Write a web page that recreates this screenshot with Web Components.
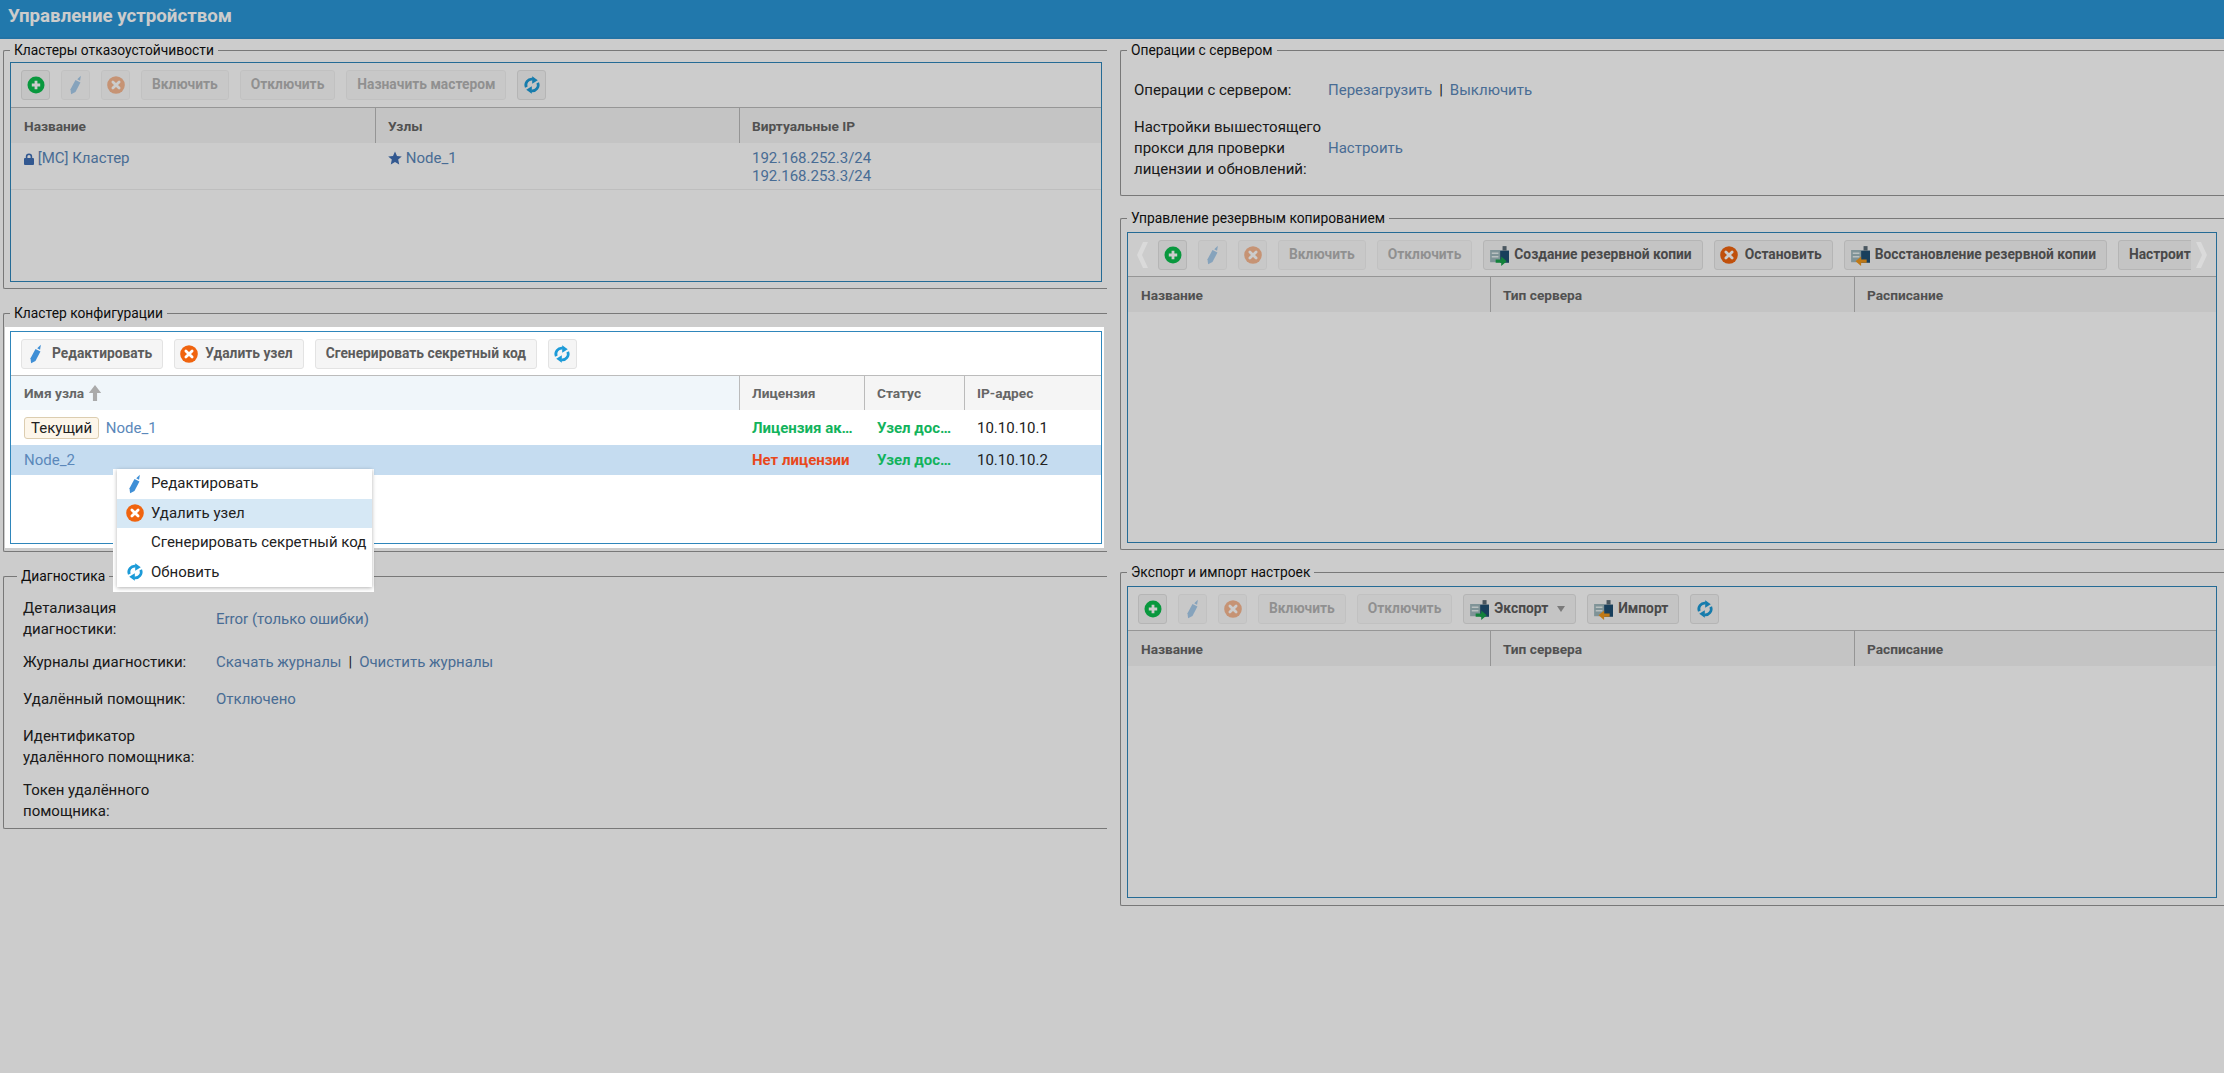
<!DOCTYPE html>
<html lang="ru">
<head>
<meta charset="utf-8">
<title>Управление устройством</title>
<style>
  html, body { margin: 0; background: #fff; }
  body { font: 15px/21px Roboto, "Liberation Sans", sans-serif; color: #222; height: 1073px; overflow: hidden; }
  a { color: #5b88ba; text-decoration: none; }
  .sep { margin: 0 7px; }
  .ok { color: #12b35c; font-weight: 700; }
  .bad { color: #e8481c; font-weight: 700; }
</style>
</head>
<body>
<x-titlebar>Управление устройством</x-titlebar>
<x-columns>
  <x-col style="--gap:16px">
    <x-group legend="Кластеры отказоустойчивости">
      <x-grid style="--cols:364px 364px 1fr;--tb:45px;height:220px">
        <x-btn slot="toolbar" icon="plus"></x-btn>
        <x-btn slot="toolbar" icon="pencil" disabled></x-btn>
        <x-btn slot="toolbar" icon="cross" disabled></x-btn>
        <x-btn slot="toolbar" disabled>Включить</x-btn>
        <x-btn slot="toolbar" disabled>Отключить</x-btn>
        <x-btn slot="toolbar" disabled>Назначить мастером</x-btn>
        <x-btn slot="toolbar" icon="refresh"></x-btn>
        <x-row head><x-cell head>Название</x-cell><x-cell head>Узлы</x-cell><x-cell head>Виртуальные IP</x-cell></x-row>
        <x-row style="border-bottom:1px solid #eee;align-items:start;padding-top:6px;box-sizing:content-box;height:40px">
          <x-cell><x-icon name="lock"></x-icon> <a>[МС] Кластер</a></x-cell>
          <x-cell><x-icon name="star" size="14"></x-icon> <a>Node_1</a></x-cell>
          <x-cell><a>192.168.252.3/24<br>192.168.253.3/24</a></x-cell>
        </x-row>
      </x-grid>
    </x-group>

    <x-group legend="Кластер конфигурации" active style="--pad-top:6px;--pad-bottom:3px">
      <x-grid style="--cols:728px 125px 100px 1fr;height:213px">
        <x-btn slot="toolbar" icon="pencil">Редактировать</x-btn>
        <x-btn slot="toolbar" icon="cross">Удалить узел</x-btn>
        <x-btn slot="toolbar">Сгенерировать секретный код</x-btn>
        <x-btn slot="toolbar" icon="refresh"></x-btn>
        <x-row head style="height:34px">
          <x-cell head sorted>Имя узла <x-icon name="up" size="16"></x-icon></x-cell>
          <x-cell head>Лицензия</x-cell><x-cell head>Статус</x-cell><x-cell head>IP-адрес</x-cell>
        </x-row>
        <x-row style="height:35px">
          <x-cell><x-badge>Текущий</x-badge> <a>Node_1</a></x-cell>
          <x-cell><span class="ok">Лицензия ак…</span></x-cell>
          <x-cell><span class="ok">Узел дос…</span></x-cell>
          <x-cell>10.10.10.1</x-cell>
        </x-row>
        <x-row style="height:30px;background:#c5dcf0">
          <x-cell><a>Node_2</a></x-cell>
          <x-cell><span class="bad">Нет лицензии</span></x-cell>
          <x-cell><span class="ok">Узел дос…</span></x-cell>
          <x-cell>10.10.10.2</x-cell>
        </x-row>
      </x-grid>
    </x-group>

    <x-group legend="Диагностика" style="--lg:12px;--field-x:18px;--label-w:175px;--label-col:193px;--pad-top:14px;--pad-bottom:6px">
      <x-field>
        <span slot="label">Детализация диагностики:</span><a>Error (только ошибки)</a>
      </x-field>
      <x-field style="margin-top:12px">
        <span slot="label">Журналы диагностики:</span><a>Скачать журналы</a><span class="sep">|</span><a>Очистить журналы</a>
      </x-field>
      <x-field style="margin-top:16px">
        <span slot="label">Удалённый помощник:</span><a>Отключено</a>
      </x-field>
      <x-field style="margin-top:16px"><span slot="label">Идентификатор удалённого помощника:</span></x-field>
      <x-field style="margin-top:12px"><span slot="label">Токен удалённого помощника:</span></x-field>
    </x-group>
  </x-col>

  <x-col style="--gap:14px;--pad-right:4px">
    <x-group legend="Операции с сервером" style="--field-x:12px;--label-w:190px;--pad-top:22px;--pad-bottom:15px">
      <x-field><span slot="label">Операции с сервером:</span><a>Перезагрузить</a><span class="sep">|</span><a>Выключить</a></x-field>
      <x-field style="margin-top:16px"><span slot="label">Настройки вышестоящего прокси для проверки лицензии и обновлений:</span><a>Настроить</a></x-field>
    </x-group>

    <x-group legend="Управление резервным копированием" style="--pad-top:2px">
      <x-grid scroll style="--cols:362px 364px 1fr;height:311px">
        <x-btn slot="toolbar" icon="plus"></x-btn>
        <x-btn slot="toolbar" icon="pencil" disabled></x-btn>
        <x-btn slot="toolbar" icon="cross" disabled></x-btn>
        <x-btn slot="toolbar" disabled>Включить</x-btn>
        <x-btn slot="toolbar" disabled>Отключить</x-btn>
        <x-btn slot="toolbar" icon="backup">Создание резервной копии</x-btn>
        <x-btn slot="toolbar" icon="cross">Остановить</x-btn>
        <x-btn slot="toolbar" icon="restore">Восстановление резервной копии</x-btn>
        <x-btn slot="toolbar">Настроить</x-btn>
        <x-row head><x-cell head>Название</x-cell><x-cell head>Тип сервера</x-cell><x-cell head>Расписание</x-cell></x-row>
      </x-grid>
    </x-group>

    <x-group legend="Экспорт и импорт настроек" style="--pad-top:2px;--pad-bottom:3px">
      <x-grid style="--cols:362px 364px 1fr;height:312px">
        <x-btn slot="toolbar" icon="plus"></x-btn>
        <x-btn slot="toolbar" icon="pencil" disabled></x-btn>
        <x-btn slot="toolbar" icon="cross" disabled></x-btn>
        <x-btn slot="toolbar" disabled>Включить</x-btn>
        <x-btn slot="toolbar" disabled>Отключить</x-btn>
        <x-btn slot="toolbar" icon="backup" caret>Экспорт</x-btn>
        <x-btn slot="toolbar" icon="restore">Импорт</x-btn>
        <x-btn slot="toolbar" icon="refresh"></x-btn>
        <x-row head><x-cell head>Название</x-cell><x-cell head>Тип сервера</x-cell><x-cell head>Расписание</x-cell></x-row>
      </x-grid>
    </x-group>
  </x-col>
</x-columns>

<x-mask></x-mask>

<x-menu style="left:113px;top:469px">
  <x-menu-item icon="pencil">Редактировать</x-menu-item>
  <x-menu-item icon="cross" active>Удалить узел</x-menu-item>
  <x-menu-item>Сгенерировать секретный код</x-menu-item>
  <x-menu-item icon="refresh">Обновить</x-menu-item>
</x-menu>

<script>
const USB = `<rect x="1" y="4.5" width="9" height="11" fill="#9fb8bd"/><path d="M2.5 7.5h6M2.5 10.5h6" stroke="#e8f0f0" stroke-width="1.4"/><rect x="10" y="5" width="8" height="11" fill="#1f4f73"/><rect x="12.2" y="1" width="3.6" height="4" fill="#5d6d78"/>`;

// name: [viewBox, width, height, markup]
const ICONS = {
  plus: ["0 0 18 18", 18, 18, `<circle cx="9" cy="9" r="8.5" fill="#0cbf4e"/><path d="M9 4.8v8.4M4.8 9h8.4" stroke="#fff" stroke-width="2.8"/>`],
  cross: ["0 0 18 18", 18, 18, `<circle cx="9" cy="9" r="8.8" fill="#f0640f"/><path d="M5.9 5.9l6.2 6.2M12.1 5.9l-6.2 6.2" stroke="#fff" stroke-width="2.8" stroke-linecap="round"/>`],
  pencil: ["0 0 18 18", 18, 18, `<g transform="rotate(28 9 9)" fill="#3f8fd6"><path d="M9 19.5 6.2 15.4V4.8h5.6v10.6z"/><path d="M7.4 3.4 9 -1.4l1.6 4.8z"/></g>`],
  refresh: ["0 0 18 18", 18, 18, `<g transform="translate(.9 .9) scale(.9)"><g fill="none" stroke="#1c9bd8" stroke-width="3"><path d="M2.6 11.6A6.6 6.6 0 0 1 9.8 2.6"/><path d="M15.4 6.4A6.6 6.6 0 0 1 8.2 15.4"/></g>
    <path d="M9.2 -.8 15.4 3.6 9.2 7.6z" fill="#1c9bd8"/><path d="M8.8 18.8 2.6 14.4l6.2-4z" fill="#1c9bd8"/></g>`],
  lock: ["0 0 10 12", 10, 12, `<path d="M2.6 6V3.6a2.4 2.4 0 0 1 4.8 0V6" fill="none" stroke="#3f6fb5" stroke-width="1.6"/><rect y="5" width="10" height="7" rx="1" fill="#3f6fb5"/>`],
  star: ["0 0 14 14", 14, 14, `<path d="M7 .4l2 4.5 4.8.5-3.6 3.2 1 4.8L7 11l-4.2 2.4 1-4.8L.2 5.4 5 4.9z" fill="#3f6fb5"/>`],
  up: ["0 0 14 14", 16, 16, `<path d="M7 0 12.4 7H8.8v7H5.2V7H1.6z" fill="#aaa"/>`],
  backup: ["0 0 18 18", 20, 20, USB + `<path d="M6 13h5v-2.6l5 4.3-5 4.3V16H6z" fill="#17a34a"/>`],
  restore: ["0 0 18 18", 20, 20, USB + `<path d="M15 13h-5v-2.6l-5 4.3 5 4.3V16h5z" fill="#f0981c"/>`]
};

class XIcon extends HTMLElement {
  connectedCallback() {
    const [box, w, h, body] = ICONS[this.getAttribute("name")];
    this.attachShadow({ mode: "open" }).innerHTML = `
      <style>
        :host { display: inline-block; vertical-align: -2px; line-height: 0; }
        svg { overflow: visible; }
      </style>
      <svg width="${w}" height="${h}" viewBox="${box}">${body}</svg>`;
  }
}

class XTitlebar extends HTMLElement {
  constructor() {
    super();
    this.attachShadow({ mode: "open" }).innerHTML = `
      <style>
        :host { display: block; height: 39px; box-sizing: border-box; padding-left: 8px;
                background: #2a97d8; border-bottom: 2px solid #2b90cf;
                color: #fff; font: 700 18.7px/33px Roboto, sans-serif; }
      </style>
      <slot></slot>`;
  }
}

class XColumns extends HTMLElement {
  constructor() {
    super();
    this.attachShadow({ mode: "open" }).innerHTML = `
      <style>
        :host { display: grid; grid-template-columns: 1104px 1104px; column-gap: 13px;
                padding: 3px 0 0 3px; }
      </style>
      <slot></slot>`;
  }
}

class XCol extends HTMLElement {
  constructor() {
    super();
    this.attachShadow({ mode: "open" }).innerHTML = `
      <style>
        :host { display: flex; flex-direction: column; gap: var(--gap); min-width: 0; }
      </style>
      <slot></slot>`;
  }
}

class XGroup extends HTMLElement {
  connectedCallback() {
    const active = this.hasAttribute("active");
    this.attachShadow({ mode: "open" }).innerHTML = `
      <style>
        :host { display: block; }
        fieldset { margin: 0; min-width: 0; border: solid #979797; border-width: 1px 0 1px 1px;
                   border-radius: 2px 0 0 2px;
                   padding: var(--pad-top, 0) 3px var(--pad-bottom, 2px) 1px; }
        legend { margin-left: var(--lg, 5px); padding: 0 4px; font-size: 13.8px; line-height: 16px; color: #111; }
        .body { padding: 4px var(--pad-right, 2px) 4px 5px; }
        .body.active { position: relative; z-index: 10; background: #fff; }
      </style>
      <fieldset>
        <legend>${this.getAttribute("legend")}</legend>
        <div class="${this.querySelector("x-grid") ? "body" : ""} ${active ? "active" : ""}"><slot></slot></div>
      </fieldset>`;
  }
}

class XGrid extends HTMLElement {
  connectedCallback() {
    const scroll = this.hasAttribute("scroll");
    const chev = (d, cls) => `<svg class="chev ${cls}" width="11" height="26" viewBox="0 0 11 26"><path d="${d}" fill="#dadada"/></svg>`;
    this.attachShadow({ mode: "open" }).innerHTML = `
      <style>
        :host { display: block; box-sizing: border-box; border: 1px solid #2f86bb; overflow: hidden; }
        .bar { display: flex; align-items: center; box-sizing: border-box; height: var(--tb, 44px);
               border-bottom: 1px solid #bcbcbc; padding: 0 10px; }
        .bar.scroll { padding: 0 9px; }
        .tools { display: flex; align-items: center; gap: 11px; min-width: 0; flex: 1; overflow: hidden; height: 100%; }
        .chev { flex: none; position: relative; z-index: 6; }
        .chev.l { margin-right: 10px; }
        .chev.r { margin-left: 5px; }
      </style>
      <div class="bar ${scroll ? "scroll" : ""}">
        ${scroll ? chev("M6 0h5L5 13l6 13H6L0 13z", "l") : ""}
        <div class="tools"><slot name="toolbar"></slot></div>
        ${scroll ? chev("M5 0H0l6 13L0 26h5l6-13z", "r") : ""}
      </div>
      <slot></slot>`;
  }
}

class XBtn extends HTMLElement {
  connectedCallback() {
    const icon = this.getAttribute("icon");
    const hasText = this.textContent.trim().length > 0;
    const usb = icon === "backup" || icon === "restore";
    this.attachShadow({ mode: "open" }).innerHTML = `
      <style>
        :host { flex: none; display: inline-flex; align-items: center; gap: ${usb ? 5 : 7}px; box-sizing: border-box; height: 30px;
                padding: 0 ${hasText ? 10 : 4.5}px 0 ${icon ? (hasText ? 5 : 4.5) : 10}px; border-radius: 3px;
                background: #f5f5f5; border: 1px solid #e3e3e3;
                font: 700 13.8px/1 Roboto, sans-serif; color: #5c5c5c; white-space: nowrap; }
        :host([disabled]) { opacity: .45; }
        .caret { margin-left: 4px; border: 4px solid transparent; border-top: 6px solid #999; border-bottom: 0; }
      </style>
      ${icon ? `<x-icon name="${icon}"></x-icon>` : ""}
      <slot></slot>
      ${this.hasAttribute("caret") ? `<span class="caret"></span>` : ""}`;
  }
}

class XRow extends HTMLElement {
  constructor() {
    super();
    this.attachShadow({ mode: "open" }).innerHTML = `
      <style>
        :host { display: grid; grid-template-columns: var(--cols); height: 35px; align-items: center; }
        :host([head]) { align-items: stretch; background: #f5f5f5; }
      </style>
      <slot></slot>`;
  }
}

class XCell extends HTMLElement {
  constructor() {
    super();
    this.attachShadow({ mode: "open" }).innerHTML = `
      <style>
        :host { display: block; min-width: 0; padding: 0 12px 0 13px; white-space: nowrap; overflow: hidden;
                font-size: 15px; line-height: 18px; color: #222; }
        :host([head]) { display: flex; align-items: center; gap: 3px; font-weight: 700; font-size: 13.7px; color: #666;
                        border-left: 1px solid #bbb; padding-left: 12px; }
        :host([head]:first-child) { border-left: 0; padding-left: 13px; }
        :host([sorted]) { background: #f0f6fa; }
      </style>
      <slot></slot>`;
  }
}

class XBadge extends HTMLElement {
  constructor() {
    super();
    this.attachShadow({ mode: "open" }).innerHTML = `
      <style>
        :host { display: inline-block; box-sizing: border-box; height: 22px; padding: 0 6px; margin-right: 3px;
                border: 1px solid #dccdb0; border-radius: 3px; background: #fdf6ea; color: #222; line-height: 20px; }
      </style>
      <slot></slot>`;
  }
}

class XField extends HTMLElement {
  constructor() {
    super();
    this.attachShadow({ mode: "open" }).innerHTML = `
      <style>
        :host { display: grid; grid-template-columns: var(--label-w) 1fr;
                column-gap: calc(var(--label-col, 194px) - var(--label-w));
                align-items: center; padding-left: var(--field-x); line-height: 21px; color: #222; }
      </style>
      <div><slot name="label"></slot></div>
      <div><slot></slot></div>`;
  }
}

class XMask extends HTMLElement {
  constructor() {
    super();
    this.attachShadow({ mode: "open" }).innerHTML = `
      <style>
        :host { position: fixed; inset: 0; z-index: 5; background: rgba(0, 0, 0, .2); }
      </style>`;
  }
}

class XMenu extends HTMLElement {
  constructor() {
    super();
    this.attachShadow({ mode: "open" }).innerHTML = `
      <style>
        :host { position: absolute; z-index: 20; width: 261px; box-sizing: border-box; padding: 0 2px 5px 4px; background: #fff; }
        .list { display: block; background: #fff; box-shadow: 0 1px 4px rgba(0, 0, 0, .3); }
      </style>
      <div class="list"><slot></slot></div>`;
  }
}

class XMenuItem extends HTMLElement {
  connectedCallback() {
    const icon = this.getAttribute("icon");
    this.attachShadow({ mode: "open" }).innerHTML = `
      <style>
        :host { display: flex; align-items: center; height: 29.5px; color: #222; font-size: 15px; white-space: nowrap; }
        :host([active]) { background: #d6e8f5; }
        .slot-icon { flex: none; width: 18px; height: 18px; margin: 0 7px 0 9px; line-height: 0; }
      </style>
      <span class="slot-icon">${icon ? `<x-icon name="${icon}"></x-icon>` : ""}</span>
      <slot></slot>`;
  }
}

customElements.define("x-icon", XIcon);
customElements.define("x-titlebar", XTitlebar);
customElements.define("x-columns", XColumns);
customElements.define("x-col", XCol);
customElements.define("x-group", XGroup);
customElements.define("x-grid", XGrid);
customElements.define("x-btn", XBtn);
customElements.define("x-row", XRow);
customElements.define("x-cell", XCell);
customElements.define("x-badge", XBadge);
customElements.define("x-field", XField);
customElements.define("x-mask", XMask);
customElements.define("x-menu", XMenu);
customElements.define("x-menu-item", XMenuItem);
</script>
</body>
</html>
